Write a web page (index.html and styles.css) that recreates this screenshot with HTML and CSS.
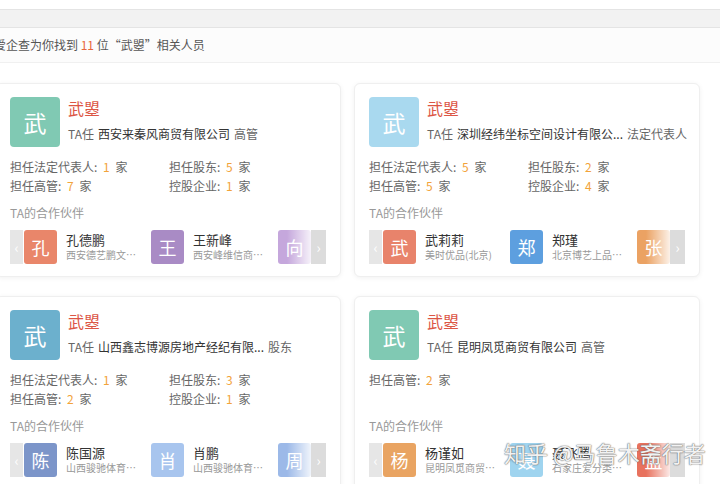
FILE: index.html
```html
<!DOCTYPE html>
<html lang="zh-CN">
<head>
<meta charset="utf-8">
<title>爱企查 - 武曌</title>
<link rel="stylesheet" href="styles.css">
</head>
<body>
<div class="page">
  <div class="topgap"></div>
  <div class="tabbar"></div>
  <div class="summary">爱企查为你找到 <span class="count">11</span> 位“武曌”相关人员</div>

  <div class="cards">
    <div class="card">
      <div class="head">
        <div class="avatar green">武</div>
        <div class="info">
          <div class="name">武曌</div>
          <div class="role"><span class="muted">TA任</span> <span class="company">西安来秦风商贸有限公司</span> <span class="muted">高管</span></div>
        </div>
      </div>
      <div class="stats">
        <div>担任法定代表人: <b>1</b> 家</div>
        <div>担任股东: <b>5</b> 家</div>
        <div>担任高管: <b>7</b> 家</div>
        <div>控股企业: <b>1</b> 家</div>
      </div>
      <div class="ptitle">TA的合作伙伴</div>
      <div class="prow">
        <div class="arrow left">‹</div>
        <div class="viewport">
          <div class="partner"><div class="pav c-kong">孔</div><div class="ptext"><div class="pname">孔德鹏</div><div class="pcomp">西安德艺鹏文化传媒</div></div></div>
          <div class="partner"><div class="pav c-wang">王</div><div class="ptext"><div class="pname">王新峰</div><div class="pcomp">西安峰维信商贸有限</div></div></div>
          <div class="partner"><div class="pav c-xiang">向</div><div class="ptext"><div class="pname">向</div><div class="pcomp">西安</div></div></div>
        </div>
        <div class="arrow right">›</div>
      </div>
    </div>

    <div class="card">
      <div class="head">
        <div class="avatar sky">武</div>
        <div class="info">
          <div class="name">武曌</div>
          <div class="role"><span class="muted">TA任</span> <span class="company">深圳经纬坐标空间设计有限公...</span> <span class="muted">法定代表人</span></div>
        </div>
      </div>
      <div class="stats">
        <div>担任法定代表人: <b>5</b> 家</div>
        <div>担任股东: <b>2</b> 家</div>
        <div>担任高管: <b>5</b> 家</div>
        <div>控股企业: <b>4</b> 家</div>
      </div>
      <div class="ptitle">TA的合作伙伴</div>
      <div class="prow">
        <div class="arrow left">‹</div>
        <div class="viewport">
          <div class="partner"><div class="pav c-wu">武</div><div class="ptext"><div class="pname">武莉莉</div><div class="pcomp">美时优品(北京)</div></div></div>
          <div class="partner"><div class="pav c-zheng">郑</div><div class="ptext"><div class="pname">郑瑾</div><div class="pcomp">北京博艺上品文化</div></div></div>
          <div class="partner"><div class="pav c-zhang">张</div><div class="ptext"><div class="pname">张</div><div class="pcomp">北京</div></div></div>
        </div>
        <div class="arrow right">›</div>
      </div>
    </div>

    <div class="card">
      <div class="head">
        <div class="avatar steel">武</div>
        <div class="info">
          <div class="name">武曌</div>
          <div class="role"><span class="muted">TA任</span> <span class="company">山西鑫志博源房地产经纪有限...</span> <span class="muted">股东</span></div>
        </div>
      </div>
      <div class="stats">
        <div>担任法定代表人: <b>1</b> 家</div>
        <div>担任股东: <b>3</b> 家</div>
        <div>担任高管: <b>2</b> 家</div>
        <div>控股企业: <b>1</b> 家</div>
      </div>
      <div class="ptitle">TA的合作伙伴</div>
      <div class="prow">
        <div class="arrow left">‹</div>
        <div class="viewport">
          <div class="partner"><div class="pav c-chen">陈</div><div class="ptext"><div class="pname">陈国源</div><div class="pcomp">山西骏驰体育文化</div></div></div>
          <div class="partner"><div class="pav c-xiao">肖</div><div class="ptext"><div class="pname">肖鹏</div><div class="pcomp">山西骏驰体育文化</div></div></div>
          <div class="partner"><div class="pav c-zhou">周</div><div class="ptext"><div class="pname">周</div><div class="pcomp">山西</div></div></div>
        </div>
        <div class="arrow right">›</div>
      </div>
    </div>

    <div class="card">
      <div class="head">
        <div class="avatar green">武</div>
        <div class="info">
          <div class="name">武曌</div>
          <div class="role"><span class="muted">TA任</span> <span class="company">昆明凤觅商贸有限公司</span> <span class="muted">高管</span></div>
        </div>
      </div>
      <div class="stats">
        <div>担任高管: <b>2</b> 家</div>
      </div>
      <div class="ptitle">TA的合作伙伴</div>
      <div class="prow">
        <div class="arrow left">‹</div>
        <div class="viewport">
          <div class="partner"><div class="pav c-yang">杨</div><div class="ptext"><div class="pname">杨谨如</div><div class="pcomp">昆明凤觅商贸有限</div></div></div>
          <div class="partner"><div class="pav c-nie">聂</div><div class="ptext"><div class="pname">聂飞腾</div><div class="pcomp">石家庄爱分类环保</div></div></div>
          <div class="partner"><div class="pav c-meng">孟</div><div class="ptext"><div class="pname">孟</div><div class="pcomp">石家</div></div></div>
        </div>
        <div class="arrow right">›</div>
      </div>
    </div>
  </div>
</div>
<div class="watermark">知乎 @马鲁木斋行者</div>
</body>
</html>
```

FILE: styles.css
```css
html, body {
  margin: 0;
  padding: 0;
  background: #ffffff;
  overflow: hidden;
}

body {
  font-family: "Noto Sans CJK SC", "Liberation Sans", sans-serif;
  color: #333333;
  width: 720px;
  height: 484px;
  position: relative;
}

.page {
  margin-left: -6px;
  width: 730px;
}

.topgap {
  height: 9px;
}

.tabbar {
  height: 17px;
  background: #f2f2f2;
  border-top: 1px solid #e4e4e4;
  border-bottom: 1px solid #e4e4e4;
}

.summary {
  height: 34px;
  line-height: 34px;
  font-size: 12px;
  color: #555555;
  background: #fcfcfc;
  border-bottom: 1px solid #f0f0f0;
}

.summary .count {
  color: #e8663d;
}

.cards {
  margin-top: 20px;
  margin-left: 1px;
  display: grid;
  grid-template-columns: 346px 346px;
  column-gap: 13px;
  row-gap: 19px;
}

.card {
  border: 1px solid #efefef;
  border-radius: 6px;
  box-shadow: 0 1px 5px rgba(0, 0, 0, 0.06);
  padding: 13px 14px 12px;
  background: #ffffff;
}

.head {
  display: flex;
  gap: 8px;
}

.avatar {
  width: 50px;
  height: 50px;
  border-radius: 4px;
  color: #ffffff;
  font-size: 23px;
  display: flex;
  align-items: center;
  justify-content: center;
  flex: 0 0 auto;
}

.green { background: #80c9b3; }
.sky { background: #a9d9ef; }
.steel { background: #6cb0cd; }

.info {
  min-width: 0;
}

.name {
  font-size: 16px;
  line-height: 22px;
  color: #dc5645;
}

.role {
  margin-top: 6px;
  font-size: 12px;
  line-height: 18px;
  white-space: nowrap;
  display: flex;
  gap: 4px;
}

.muted {
  color: #666666;
  flex-shrink: 0;
}

.company {
  color: #333333;
  white-space: nowrap;
}

.stats {
  margin-top: 10px;
  display: grid;
  grid-template-columns: 159px 1fr;
  grid-auto-rows: 19px;
  min-height: 38px;
  font-size: 12px;
  line-height: 19px;
  color: #666666;
}

.stats b {
  font-weight: normal;
  color: #f2a33a;
  padding: 0 3px;
}

.ptitle {
  margin-top: 9px;
  font-size: 12px;
  line-height: 18px;
  color: #999999;
}

.prow {
  margin-top: 8px;
  height: 34px;
  display: flex;
}

.arrow {
  flex: 0 0 auto;
  background: #e6e6e6;
  color: #ffffff;
  font-size: 14px;
  display: flex;
  align-items: center;
  justify-content: center;
}

.arrow.left { width: 13px; }
.arrow.right { width: 15px; background: #dcdcdc; }

.viewport {
  flex: 1;
  display: flex;
  overflow: hidden;
  padding-left: 1px;
  position: relative;
}

.viewport::after {
  content: "";
  position: absolute;
  top: 0;
  right: 0;
  bottom: 0;
  width: 24px;
  background: linear-gradient(to right, rgba(255, 255, 255, 0), rgba(255, 255, 255, 0.85));
}

.partner {
  flex: 0 0 127px;
  display: flex;
  gap: 9px;
}

.pav {
  width: 33px;
  height: 34px;
  border-radius: 3px;
  color: #ffffff;
  font-size: 18px;
  display: flex;
  align-items: center;
  justify-content: center;
  flex: 0 0 auto;
}

.c-kong { background: #e9866a; }
.c-wang { background: #a98bc5; }
.c-xiang { background: #c5a7dc; }
.c-wu { background: #e8836b; }
.c-zheng { background: #5d9fdf; }
.c-zhang { background: #eba263; }
.c-chen { background: #7c95c9; }
.c-xiao { background: #a8c5ee; }
.c-zhou { background: #9cb9e8; }
.c-yang { background: #e9a462; }
.c-nie { background: #9fd4ef; }
.c-meng { background: #e8725e; }

.ptext {
  min-width: 0;
  padding-top: 1px;
}

.pname {
  font-size: 13px;
  line-height: 17px;
  color: #333333;
  white-space: nowrap;
}

.pcomp {
  font-size: 10px;
  line-height: 14px;
  color: #999999;
  width: 70px;
  white-space: nowrap;
  overflow: hidden;
  text-overflow: ellipsis;
}

.watermark {
  position: absolute;
  left: 504px;
  top: 438px;
  font-size: 22px;
  line-height: 28px;
  color: rgba(255, 255, 255, 0.92);
  white-space: nowrap;
  text-shadow: 0 0 1px #777777, 0 0 1px #777777, 0 0 2px rgba(0, 0, 0, 0.3);
}
```
